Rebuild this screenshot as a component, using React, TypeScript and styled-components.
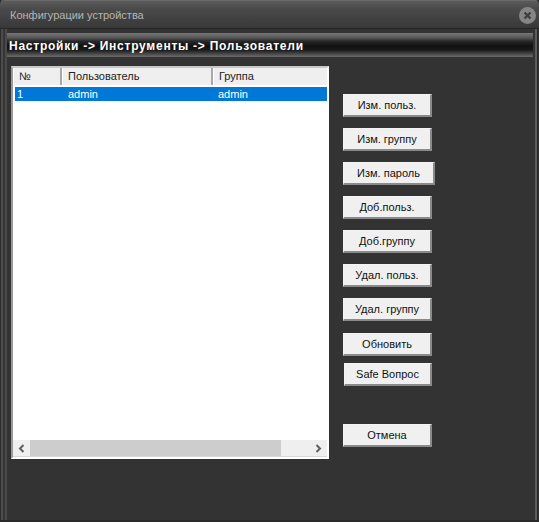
import * as React from 'react';
import styled, { createGlobalStyle } from 'styled-components';

const GlobalStyle = createGlobalStyle`
  html, body {
    margin: 0;
    padding: 0;
    background: #333333;
  }
`;

// side stripes of the skinned window frame
const Window = styled.div`
  width: 539px;
  height: 522px;
  box-sizing: border-box;
  overflow: hidden;
  font-family: Tahoma, 'Liberation Sans', 'DejaVu Sans', sans-serif;
  border-bottom: 2px solid #2a2a2a;
  background-color: #333333;
  background-image:
    linear-gradient(
      to right,
      #2c2c2c 0 1px,
      #4c4c4c 1px 3px,
      #363636 3px 5px,
      #4a4a4a 5px 7px,
      transparent 7px
    ),
    linear-gradient(to left, #2c2c2c 0 2px, #5c5c5c 2px 4px, transparent 4px);
`;

const TitleBar = styled.div`
  height: 29px;
  box-sizing: border-box;
  display: flex;
  align-items: center;
  justify-content: space-between;
  padding: 1px 3px 0 10px;
  background: linear-gradient(#5b5b5b 0, #4a4a4a 8px, #3f3f3f 20px, #383838 100%);
  border-top: 1px solid #6a6a6a;
  border-bottom: 1px solid #262626;
  border-radius: 5px 5px 0 0;
`;

const TitleText = styled.span`
  font-size: 11px;
  color: #b5b5b5;
`;

const CloseIcon = () => (
  <svg width="17" height="17" viewBox="0 0 17 17">
    <circle cx="8.5" cy="8.5" r="8.5" fill="#858585" />
    <path d="M5.5 5.5l6 6M11.5 5.5l-6 6" stroke="#3f3f3f" strokeWidth="2.4" />
  </svg>
);

const Banner = styled.div`
  height: 24px;
  box-sizing: border-box;
  margin: 4px 6px 0 7px;
  padding: 1px 0 0 2px;
  display: flex;
  align-items: center;
  background: linear-gradient(#777 0, #555 5px, #2a2a2a 8px, #111 13px, #1a1a1a 17px, #555 22px, #6c6c6c 100%);
`;

const BannerText = styled.span`
  font-family: 'Liberation Sans', sans-serif;
  font-size: 12px;
  font-weight: 700;
  letter-spacing: 0.75px;
  color: #ffffff;
  white-space: nowrap;
`;

const Content = styled.div`
  display: flex;
  align-items: flex-start;
  padding: 9px 0 0 11px;
`;

const Table = styled.div`
  width: 318px;
  height: 393px;
  box-sizing: border-box;
  display: flex;
  flex-direction: column;
  background: #ffffff;
  border: 2px solid #ffffff;
  border-left-color: #9a9a9a;
  border-top-color: #c8c8c8;
`;

const HeaderRow = styled.div`
  display: grid;
  grid-template-columns: 49px 151px 1fr;
  height: 17px;
  background: #efefef;
  margin-bottom: 2px;
`;

const HeaderCell = styled.div`
  font-size: 11px;
  line-height: 17px;
  color: #222;
  padding-left: 5px;
  border-right: 2px solid #a8a8a8;
  border-left: 1px solid #fff;

  &:last-child {
    border-right: none;
  }
`;

const Rows = styled.div`
  flex: 1;
`;

const DataRow = styled.div`
  display: grid;
  grid-template-columns: 51px 150px 1fr;
  height: 14px;
  margin-left: 2px;
  background: #0078d7;
`;

const DataCell = styled.div`
  font-size: 11px;
  line-height: 14px;
  color: #ffffff;
  padding-left: 2px;
`;

const ScrollBar = styled.div`
  height: 16px;
  display: flex;
  align-items: stretch;
  background: #efefef;
  border-bottom: 1px solid #d8d8d8;
`;

const ScrollArrow = styled.div`
  width: 17px;
  display: flex;
  align-items: center;
  justify-content: center;
`;

const ScrollTrack = styled.div`
  flex: 1;
  display: flex;
`;

const ScrollThumb = styled.div`
  width: 251px;
  background: #cdcdcd;
`;

const Side = styled.div`
  display: flex;
  flex-direction: column;
  align-items: flex-start;
  padding: 28px 0 0 14px;
`;

const Button = styled.button<{ $top: number; $wide?: boolean; $inset?: boolean }>`
  width: ${({ $wide, $inset }) => ($wide ? 92 : $inset ? 88 : 89)}px;
  height: 23px;
  box-sizing: border-box;
  margin: ${({ $top }) => $top}px 0 0 ${({ $inset }) => ($inset ? 1 : 0)}px;
  padding: 0 0 1px;
  background: #f0f0f0;
  border: 1px solid #f4f4f4;
  border-right: 2px solid #8a8a8a;
  border-bottom: 2px solid #8a8a8a;
  font-family: Tahoma, 'Liberation Sans', 'DejaVu Sans', sans-serif;
  font-size: 11px;
  color: #111;
`;

const buttons = [
  { label: 'Изм. польз.', top: 0 },
  { label: 'Изм. группу', top: 11 },
  { label: 'Изм. пароль', top: 11, wide: true },
  { label: 'Доб.польз.', top: 11 },
  { label: 'Доб.группу', top: 11 },
  { label: 'Удал. польз.', top: 11 },
  { label: 'Удал. группу', top: 11 },
  { label: 'Обновить', top: 12 },
  { label: 'Safe Вопрос', top: 7, inset: true },
  { label: 'Отмена', top: 38 },
];

const ArrowIcon = ({ d }: { d: string }) => (
  <svg width="7" height="9" viewBox="0 0 7 9">
    <path d={d} fill="none" stroke="#606060" strokeWidth="2" />
  </svg>
);

export default function App() {
  return (
    <Window>
      <GlobalStyle />
      <TitleBar>
        <TitleText>Конфигурации устройства</TitleText>
        <CloseIcon />
      </TitleBar>
      <Banner>
        <BannerText>Настройки -&gt; Инструменты -&gt; Пользователи</BannerText>
      </Banner>
      <Content>
        <Table>
          <HeaderRow>
            <HeaderCell>№</HeaderCell>
            <HeaderCell>Пользователь</HeaderCell>
            <HeaderCell>Группа</HeaderCell>
          </HeaderRow>
          <Rows>
            <DataRow>
              <DataCell>1</DataCell>
              <DataCell>admin</DataCell>
              <DataCell>admin</DataCell>
            </DataRow>
          </Rows>
          <ScrollBar>
            <ScrollArrow>
              <ArrowIcon d="M5.5 1L2 4.5 5.5 8" />
            </ScrollArrow>
            <ScrollTrack>
              <ScrollThumb />
            </ScrollTrack>
            <ScrollArrow>
              <ArrowIcon d="M1.5 1L5 4.5 1.5 8" />
            </ScrollArrow>
          </ScrollBar>
        </Table>
        <Side>
          {buttons.map(b => (
            <Button key={b.label} $top={b.top} $wide={b.wide} $inset={b.inset}>
              {b.label}
            </Button>
          ))}
        </Side>
      </Content>
    </Window>
  );
}
